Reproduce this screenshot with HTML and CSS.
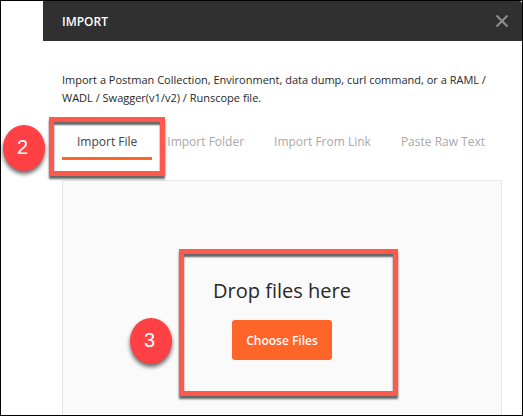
FILE: index.html
```html
<!DOCTYPE html>
<html lang="en">
<head>
<meta charset="utf-8">
<title>Import</title>
<link rel="stylesheet" href="styles.css">
</head>
<body>
<main class="modal">
  <header class="modal-header">
    <h1 class="modal-title">IMPORT</h1>
    <button class="close" type="button" aria-label="Close">
      <svg width="14" height="14" viewBox="0 0 14 14" aria-hidden="true"><path d="M1.500 1.500l11 11M12.500 1.500l-11 11" fill="none" stroke="#8e8e8e" stroke-width="2"/></svg>
    </button>
  </header>
  <div class="modal-body">
    <p class="intro">Import a Postman Collection, Environment, data dump, curl command, or a RAML / WADL / Swagger(v1/v2) / Runscope file.</p>
    <nav class="tabs">
      <div class="step">
        <button class="tab active" type="button">Import File</button>
        <div class="callout callout-tab"><span class="badge">2</span></div>
      </div>
      <button class="tab" type="button">Import Folder</button>
      <button class="tab" type="button">Import From Link</button>
      <button class="tab" type="button">Paste Raw Text</button>
    </nav>
    <section class="dropzone">
      <div class="step drop-content">
        <h2 class="drop-title">Drop files here</h2>
        <button class="choose" type="button">Choose Files</button>
        <div class="callout callout-drop"><span class="badge">3</span></div>
      </div>
    </section>
  </div>
</main>
</body>
</html>
```
FILE: styles.css
```css
* {
  box-sizing: border-box;
}

body {
  margin: 0;
  min-height: 100vh;
  display: flex;
  border: 1px solid #000;
  background: #fff;
  color: #282828;
  font-family: "Open Sans", sans-serif;
}

button {
  margin: 0;
  border: 0;
  background: none;
  font-family: inherit;
}

.modal {
  flex: 1;
  margin-left: 42px;
  display: flex;
  flex-direction: column;
}

.modal-header {
  height: 40px;
  padding: 0 13px 0 19px;
  display: flex;
  align-items: center;
  justify-content: space-between;
  background: #303030;
  border-top-right-radius: 3px;
}

.modal-title {
  margin: 0;
  color: #fff;
  font-size: 12px;
  font-weight: 600;
}

.close {
  display: flex;
  padding: 0;
}

.modal-body {
  flex: 1;
  display: flex;
  flex-direction: column;
  padding: 30px 20px 0 19px;
}

.intro {
  margin: 0;
  font-size: 11px;
  line-height: 18px;
}

.tabs {
  display: flex;
  margin: 15px 0 20px;
}

.tab {
  display: block;
  height: 38px;
  padding: 5px 15px 0;
  border-bottom: 3px solid transparent;
  color: #a9a9a9;
  font-size: 12px;
  line-height: 30px;
  white-space: nowrap;
}

.tab.active {
  color: #444;
  border-bottom-color: #ff6428;
}

.step {
  position: relative;
}

.dropzone {
  flex: 1;
  display: flex;
  flex-direction: column;
  align-items: center;
  padding-top: 95px;
  border: 1px solid #e6e6e6;
  border-bottom: 0;
  background: #fafafa;
}

.drop-content {
  display: flex;
  flex-direction: column;
  align-items: center;
  gap: 14px;
}

.drop-title {
  margin: 0;
  font-size: 20px;
  font-weight: 400;
  line-height: 30px;
}

.choose {
  width: 100px;
  height: 40px;
  padding: 0;
  border-radius: 3px;
  background: #ff6428;
  color: #fff;
  font-size: 12px;
  font-weight: 600;
}

.callout {
  position: absolute;
  border: 5px solid #ff594d;
  box-shadow: 0 3px 2px rgba(0, 0, 0, 0.6), inset 0 3px 2px rgba(0, 0, 0, 0.6);
  pointer-events: none;
}

.callout-tab {
  inset: -5px -13px -16px;
}

.callout-drop {
  inset: -27px -47px -36px -34px;
}

.badge {
  position: absolute;
  display: flex;
  align-items: center;
  justify-content: center;
  width: 42px;
  height: 46px;
  padding: 0 3px 2px 0;
  border-radius: 50%;
  background: #ff4146;
  box-shadow: 0 3px 4px rgba(0, 0, 0, 0.6);
  color: #fff;
  font-family: "Liberation Sans", sans-serif;
  font-size: 20px;
}

.callout-tab .badge {
  top: 3px;
  left: -51px;
}

.callout-drop .badge {
  top: 64px;
  left: -54px;
}
```
